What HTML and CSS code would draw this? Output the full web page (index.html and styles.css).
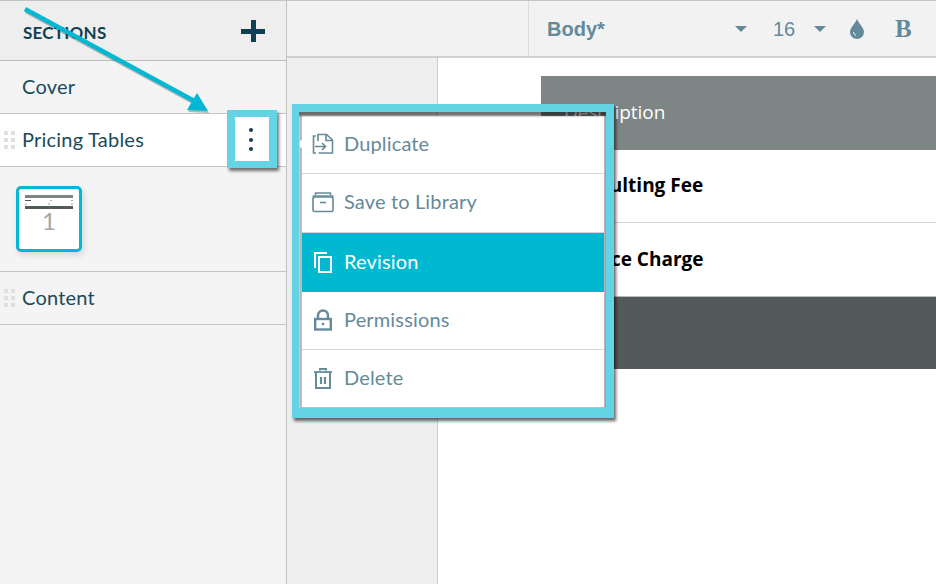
FILE: index.html
```html
<!DOCTYPE html>
<html lang="en">
<head>
<meta charset="utf-8">
<title>Sections</title>
<link rel="stylesheet" href="styles.css">
</head>
<body>
<div class="app">
  <aside class="sidebar">
    <header class="side-head"><span class="side-title">SECTIONS</span><span class="plus"></span></header>
    <div class="row"><span class="row-label">Cover</span></div>
    <div class="row row-active">
      <span class="grip"><i></i><i></i><i></i><i></i><i></i><i></i></span>
      <span class="row-label">Pricing Tables</span>
      <span class="kebab"><i></i><i></i><i></i></span>
    </div>
    <div class="thumbs">
      <div class="thumb">
        <div class="mini-head"></div>
        <div class="mini-row"><b></b><u></u><u></u></div>
        <div class="mini-row mini-row-light"><u></u><u></u><u></u></div>
        <div class="mini-foot"></div>
        <div class="thumb-num">1</div>
      </div>
    </div>
    <div class="row row-top">
      <span class="grip"><i></i><i></i><i></i><i></i><i></i><i></i></span>
      <span class="row-label">Content</span>
    </div>
  </aside>
  <main class="main">
    <div class="toolbar">
      <div class="tool-blank"></div>
      <div class="tools">
        <span class="style-name">Body*</span>
        <span class="caret caret-a"></span>
        <span class="size">16</span>
        <span class="caret caret-b"></span>
        <svg class="drop" width="16" height="20" viewBox="0 0 16 20"><path fill="#628a9a" d="M8 0C6.500 4 1 9 1 13a7 7 0 0 0 14 0C15 9 9.500 4 8 0z"/><path fill="none" stroke="#f2f2f2" stroke-width="1" d="M4.500 13a3.500 3.500 0 0 0 2.500 3.300"/></svg>
        <span class="bold-btn">B</span>
      </div>
    </div>
    <div class="canvas">
      <div class="gutter"></div>
      <div class="page">
        <div class="table">
          <div class="t-head">Description</div>
          <div class="t-row">Consulting Fee</div>
          <div class="t-row t-row-last">Service Charge</div>
          <div class="t-foot"></div>
        </div>
      </div>
    </div>
  </main>
</div>

<nav class="menu">
  <div class="menu-item menu-item-short">
    <svg class="ico" width="22" height="22" viewBox="0 0 22 22" fill="none" stroke="#658a99" stroke-width="1.600"><path d="M4 3H1.500v17H4M6 8V1.500h8.500L20.500 7v13H6.500M14 2v5.500h6.500"/><path d="M3 13.500h10M10 10l3.500 3.500L10 17"/></svg>
    <span>Duplicate</span>
  </div>
  <div class="menu-item">
    <svg class="ico" width="22" height="22" viewBox="0 0 22 22" fill="none" stroke="#658a99" stroke-width="1.600"><path d="M3.500 4V2h15v2M1.500 7.500V5h19v2.500"/><rect x="1" y="6" width="20" height="14.500" rx="1.500"/><path d="M8 11.500h6"/></svg>
    <span>Save to Library</span>
  </div>
  <div class="menu-item menu-item-on">
    <svg class="ico" width="22" height="22" viewBox="0 0 22 22" fill="none" stroke="#fff" stroke-width="2"><path d="M3 17V2h12"/><path d="M7 6h12v15H7z"/></svg>
    <span>Revision</span>
  </div>
  <div class="menu-item menu-item-short">
    <svg class="ico" width="22" height="22" viewBox="0 0 22 22" fill="none" stroke="#658a99" stroke-width="2.400"><path d="M6 10V6.500a5 5 0 0 1 10 0V10"/><rect x="3.200" y="10" width="15.600" height="10.500"/><circle cx="11" cy="15" r="1.300" fill="#658a99" stroke="none"/></svg>
    <span>Permissions</span>
  </div>
  <div class="menu-item menu-item-short">
    <svg class="ico" width="22" height="22" viewBox="0 0 22 22" fill="none" stroke="#658a99" stroke-width="2"><path d="M2 5h18" stroke-width="1.800"/><path d="M8 3.500V2h6v1.500"/><path d="M4 6v15h14V6"/><path d="M9 10v7M13 10v7" stroke-width="2.200"/></svg>
    <span>Delete</span>
  </div>
</nav>

<div class="mark mark-kebab"></div>
<div class="mark mark-menu"></div>
<svg class="arrow" width="230" height="130" viewBox="0 0 230 130">
  <g class="arrow-shadow" fill="#000" stroke="#000"><path d="M25 9 198 103" stroke-width="4.500" fill="none"/><path d="M208 111 187 110 197 93z" stroke="none"/></g>
  <g fill="#00b8d4" stroke="#00b8d4"><path d="M25 9 198 103" stroke-width="4.500" fill="none"/><path d="M208 111 187 110 197 93z" stroke="none"/></g>
</svg>
</body>
</html>
```
FILE: styles.css
```css
* { box-sizing: border-box; }
html, body { margin: 0; height: 100%; overflow: hidden; background: #fff; }
body { font-family: Lato, "Liberation Sans", sans-serif; position: relative; }

.app { display: flex; height: 584px; border-top: 1px solid #c4c4c4; }

/* sidebar */
.sidebar { width: 287px; flex: none; background: #f4f4f4; border-right: 1px solid #c2c2c2; }
.side-head { height: 60px; background: #eeeeee; border-bottom: 1px solid #bdbdbd; display: flex; align-items: center; justify-content: space-between; padding: 3px 21px 0 23px; }
.side-title { font-size: 17px; font-weight: 700; letter-spacing: .25px; color: #123f50; }
.plus { width: 24px; height: 22px; background: linear-gradient(#0e3f52, #0e3f52) center / 24px 5px no-repeat, linear-gradient(#0e3f52, #0e3f52) center / 5px 22px no-repeat; margin-top: -2px; }
.row { height: 53px; border-bottom: 1px solid #c4c4c4; display: flex; align-items: center; padding: 0 0 2px 22px; position: relative; }
.row-active { background: #fff; }
.row-top { border-top: 1px solid #c4c4c4; height: 54px; }
.row-label { font-size: 20px; letter-spacing: .22px; color: #1b4a5b; }
.grip { position: absolute; left: 4px; top: 17px; display: grid; grid-template-columns: 4px 4px; gap: 3px; }
.grip i { width: 4px; height: 4px; background: #dfdfdf; }
.kebab { position: absolute; left: 248.500px; top: 14px; display: flex; flex-direction: column; gap: 5.500px; }
.kebab i { width: 4px; height: 4px; border-radius: 50%; background: #0e3f52; }

.thumbs { height: 104px; padding: 19px 0 0 16px; }
.thumb { width: 66px; height: 66px; background: #fff; border: 3px solid #00b8d4; border-radius: 5px; box-shadow: 2px 3px 6px rgba(0,0,0,.12); padding: 6px 6px 0; }
.mini-head { height: 3px; background: #7d8585; }
.mini-row { height: 4px; display: flex; justify-content: space-between; align-items: center; }
.mini-row b { width: 6px; height: 1px; background: #555; }
.mini-row u { width: 2px; height: 1px; background: #aaa; }
.mini-row-light u { height: 2px; background: #ccc; }
.mini-foot { height: 3px; background: #525a5c; }
.thumb-num { font-size: 24px; font-weight: 400; line-height: 24px; text-align: center; color: #a5a5a5; }

/* main */
.main { flex: 1; display: flex; flex-direction: column; min-width: 0; }
.toolbar { height: 57px; flex: none; background: #f2f2f2; border-bottom: 2px solid #cfcfcf; display: flex; }
.tool-blank { width: 242px; border-right: 1px solid #dcdcdc; }
.tools { flex: 1; display: flex; align-items: center; font-family: "Liberation Sans", Arial, sans-serif; color: #628a9a; padding: 1px 0 0 18px; }
.style-name { font-size: 20px; font-weight: 700; width: 188px; }
.caret { width: 0; height: 0; border-left: 6px solid transparent; border-right: 6px solid transparent; border-top: 6px solid #628a9a; }
.size { font-size: 20px; margin-left: 26px; width: 41px; }
.drop { margin-left: 23px; }
.bold-btn { font-family: "Liberation Serif", serif; font-weight: 700; font-size: 25px; margin-left: 30px; }

.canvas { flex: 1; display: flex; min-height: 0; }
.gutter { width: 151px; background: #eeeeee; border-right: 1px solid #cdcdcd; }
.page { flex: 1; background: #fff; padding-top: 18px; padding-left: 103px; }
.t-head { height: 74px; background: #7d8585; color: #fff; font: 400 19px "Open Sans", sans-serif; display: flex; align-items: center; padding: 0 0 3px 23px; }
.t-row { height: 73px; border-bottom: 1px solid #ccd4d4; display: flex; align-items: center; padding: 0 0 2px 23px; font: 700 19px "Open Sans", sans-serif; color: #000; }
.t-row-last { border-bottom: 0; }
.t-foot { height: 73px; background: #525a5c; border-top: 1px solid #b5bcbc; }

/* overlays */
.menu { position: absolute; left: 300px; top: 116px; width: 306px; height: 293px; background: #fff; border: 2px solid #bdbdbd; border-top: 0; display: flex; flex-direction: column; font-size: 20px; letter-spacing: .15px; color: #658a99; }
.menu::before { content: ""; position: absolute; left: -3px; top: 24px; width: 6px; height: 8px; border-radius: 50%; background: #fff; }
.menu-item { height: 59px; flex: none; display: flex; align-items: center; padding: 0 0 2px 10px; gap: 10px; border-bottom: 1px solid #d6d6d6; }
.menu-item span { padding-bottom: 2px; }
.menu-item-short { height: 58px; }
.menu-item:last-child { border-bottom: 0; }
.menu-item-on { background: #00b8d0; color: #fff; border-bottom: 0; }

.mark { position: absolute; border: 8px solid #64d3e3; box-shadow: 2px 3px 3px rgba(0,0,0,.55); }
.mark-kebab { left: 227px; top: 110px; width: 50px; height: 58px; border-width: 7px 8px; }
.mark-menu { left: 292px; top: 104px; width: 322px; height: 314px; border-width: 8px 8px 10px 7px; box-shadow: 2px 3px 3px rgba(0,0,0,.6), inset 0 4px 2px rgba(0,0,0,.55); }

.arrow { position: absolute; left: 0; top: 0; overflow: visible; }
.arrow-shadow { opacity: .25; transform: translate(1px, 2px); }
```
